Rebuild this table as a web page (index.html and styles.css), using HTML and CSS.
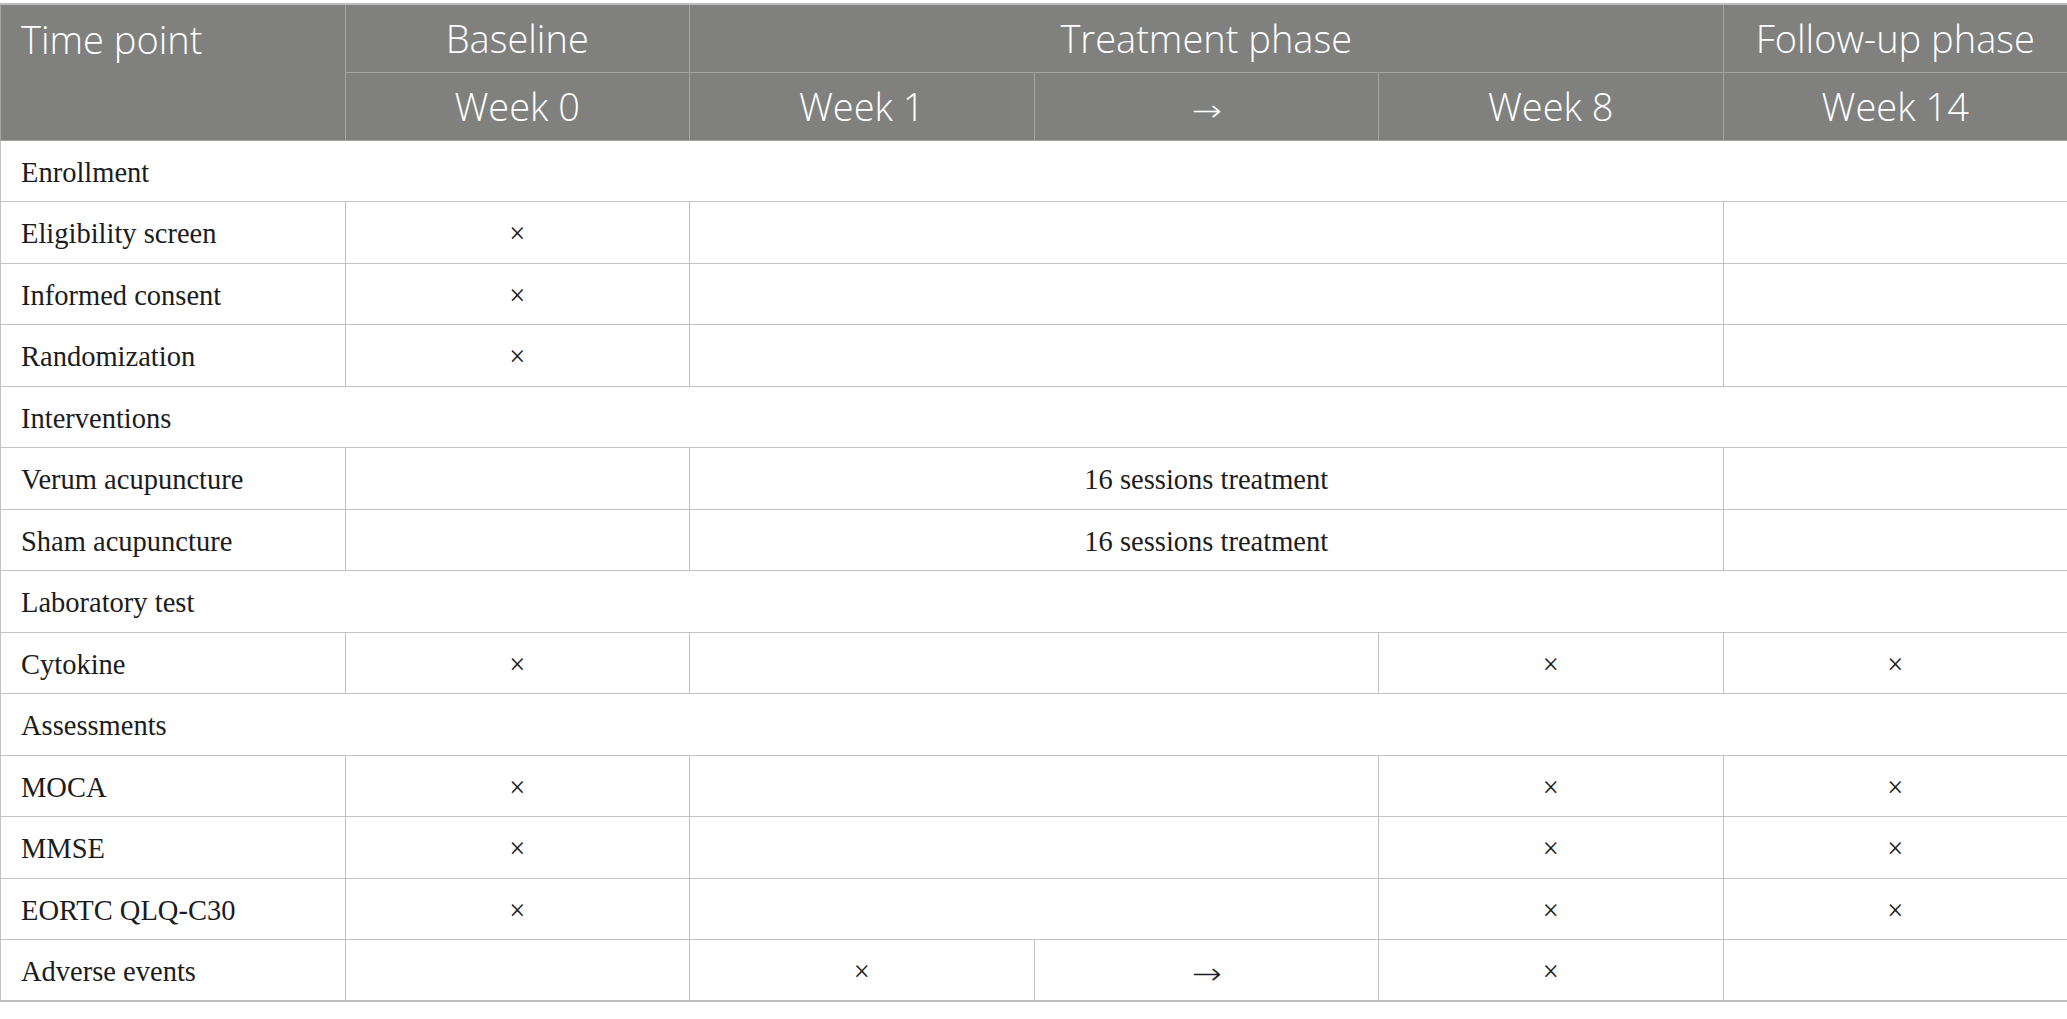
FILE: index.html
```html
<!DOCTYPE html>
<html>
<head>
<meta charset="utf-8">
<link rel="stylesheet" href="styles.css">
</head>
<body>
<div class="wrap">
<table class="grid">
  <colgroup>
    <col class="c"><col class="c"><col class="c"><col class="c"><col class="c"><col class="c">
  </colgroup>
  <thead>
    <tr class="h1">
      <th class="lead" rowspan="2">Time point</th>
      <th>Baseline</th>
      <th colspan="3">Treatment phase</th>
      <th>Follow-up phase</th>
    </tr>
    <tr class="h2">
      <th>Week 0</th>
      <th>Week 1</th>
      <th><span class="arrow">→</span></th>
      <th>Week 8</th>
      <th>Week 14</th>
    </tr>
  </thead>
  <tbody>
    <tr><td class="lbl" colspan="6">Enrollment</td></tr>
    <tr><td class="lbl">Eligibility screen</td><td>×</td><td colspan="3"></td><td></td></tr>
    <tr><td class="lbl">Informed consent</td><td>×</td><td colspan="3"></td><td></td></tr>
    <tr><td class="lbl">Randomization</td><td>×</td><td colspan="3"></td><td></td></tr>
    <tr><td class="lbl" colspan="6">Interventions</td></tr>
    <tr><td class="lbl">Verum acupuncture</td><td></td><td colspan="3">16 sessions treatment</td><td></td></tr>
    <tr><td class="lbl">Sham acupuncture</td><td></td><td colspan="3">16 sessions treatment</td><td></td></tr>
    <tr><td class="lbl" colspan="6">Laboratory test</td></tr>
    <tr><td class="lbl">Cytokine</td><td>×</td><td colspan="2"></td><td>×</td><td>×</td></tr>
    <tr><td class="lbl" colspan="6">Assessments</td></tr>
    <tr><td class="lbl">MOCA</td><td>×</td><td colspan="2"></td><td>×</td><td>×</td></tr>
    <tr><td class="lbl">MMSE</td><td>×</td><td colspan="2"></td><td>×</td><td>×</td></tr>
    <tr><td class="lbl">EORTC QLQ-C30</td><td>×</td><td colspan="2"></td><td>×</td><td>×</td></tr>
    <tr><td class="lbl">Adverse events</td><td></td><td>×</td><td><span class="arrow">→</span></td><td>×</td><td></td></tr>
  </tbody>
</table>
</div>
</body>
</html>
```
FILE: styles.css
```css
html, body {
  margin: 0;
  padding: 0;
  background: #ffffff;
}
.wrap {
  padding-top: 3px;
}
.grid {
  width: 2067px;
  border-collapse: collapse;
  table-layout: fixed;
}
.grid .c {
  width: 344.5px;
}
.grid th {
  background: #80817f;
  color: #ffffff;
  font-family: "Open Sans", "Noto Sans", sans-serif;
  font-weight: 350;
  font-size: 38px;
  text-align: center;
  vertical-align: middle;
  border: 1px solid #a4a5a3;
  padding: 0 10px;
  height: 68px;
  box-sizing: border-box;
}
.grid th.lead {
  text-align: left;
  vertical-align: top;
  padding: 8px 20px 0 20px;
}
.grid thead tr.h1 th {
  border-top: 2px solid #bcbcbc;
}
.grid td {
  font-family: "Liberation Serif", "Times New Roman", serif;
  font-size: 28.5px;
  color: #1c1c1c;
  text-align: center;
  vertical-align: middle;
  border: 1px solid #c2c2c2;
  height: 61.5px;
  padding: 4px 10px 0 10px;
  box-sizing: border-box;
}
.grid td.lbl {
  text-align: left;
  padding-left: 20px;
}
.grid tbody tr:last-child td {
  border-bottom: 2px solid #bcbcbc;
}
.arrow {
  font-family: "Noto Sans", "DejaVu Sans", sans-serif;
  font-weight: 300;
  font-size: 30px;
  display: inline-block;
  transform: scaleX(1.2);
}
```
